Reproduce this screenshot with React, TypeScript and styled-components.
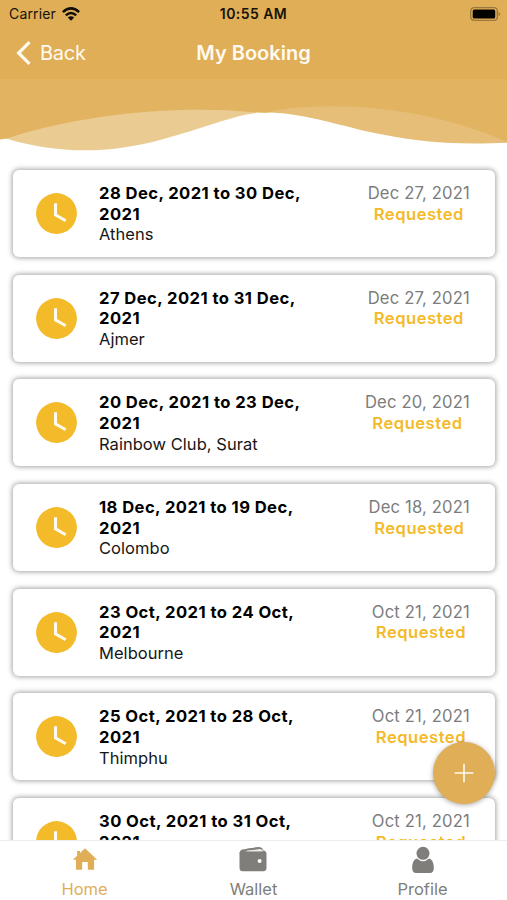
import React from "react";
import styled, { createGlobalStyle } from "styled-components";

const gold = "#e0ae57";
const amber = "#f3ba2a";

const GlobalStyle = createGlobalStyle`
  * { box-sizing: border-box; }
  body { margin: 0; background: #fff; font-family: Inter, "Liberation Sans", sans-serif; overflow: hidden; }
  svg { display: block; }
`;

const Screen = styled.div`
  position: relative;
  width: 507px;
  height: 900px;
  display: flex;
  flex-direction: column;
  overflow: hidden;
  background: #fff;
`;

const Header = styled.header`
  height: 79px;
  flex: none;
  background: ${gold};
`;

const StatusBar = styled.div`
  height: 27px;
  display: grid;
  grid-template-columns: 1fr auto 1fr;
  align-items: center;
  padding: 0 6px 0 9px;
  color: #16120a;
`;

const Carrier = styled.div`
  display: flex;
  align-items: center;
  gap: 6px;
  font-size: 14px;
  letter-spacing: 0.15px;
`;

const Time = styled.div`
  margin-right: 3px;
  font-size: 14px;
  font-weight: 600;
  letter-spacing: 0.45px;
`;

const BatterySlot = styled.div`
  justify-self: end;
`;

const NavBar = styled.div`
  height: 52px;
  display: grid;
  grid-template-columns: 1fr auto 1fr;
  align-items: center;
  padding: 0 16px;
  color: #fffaf0;
`;

const BackButton = styled.div`
  display: flex;
  align-items: center;
  gap: 9px;
  font-size: 20px;
  letter-spacing: -0.25px;
`;

const Title = styled.h1`
  margin: 0;
  font-size: 20px;
  font-weight: 600;
  letter-spacing: 0;
`;

const Wave = styled.svg`
  flex: none;
`;

const List = styled.main`
  flex: 1;
  min-height: 0;
  display: flex;
  flex-direction: column;
  gap: 17.7px;
  padding: 10px 12px 0 13px;
  overflow: hidden;
`;

const Card = styled.article`
  height: 87px;
  flex: none;
  display: flex;
  align-items: flex-start;
  padding: 13px 25px 0 23px;
  border-radius: 6px;
  background: #fff;
  box-shadow: 0 0 5px 1px rgba(0, 0, 0, 0.36);
`;

const ClockSlot = styled.div`
  width: 63px;
  flex: none;
  padding-top: 10px;
`;

const Trip = styled.div`
  width: 215px;
  font-size: 16.6px;
  line-height: 20.6px;
  color: #161616;
`;

const Dates = styled.div`
  font-weight: 700;
  color: #000;
  letter-spacing: 0.43px;
`;

const Place = styled.div`
  font-size: 16.5px;
  letter-spacing: 0.04px;
`;

const Meta = styled.div`
  margin-left: auto;
  text-align: center;
  font-size: 16.6px;
  line-height: 20.6px;
  letter-spacing: 0.18px;
  color: #7c7c7c;
`;

const Status = styled.div`
  font-weight: 600;
  letter-spacing: 0.5px;
  color: ${amber};
`;

const AddButton = styled.div`
  position: absolute;
  right: 12px;
  top: 742px;
  width: 62px;
  height: 62px;
  border-radius: 50%;
  display: grid;
  place-items: center;
  background: ${gold};
  box-shadow: 0 1px 5px rgba(0, 0, 0, 0.35);
`;

const TabBar = styled.nav`
  position: relative;
  height: 60px;
  flex: none;
  display: grid;
  grid-template-columns: repeat(3, 1fr);
  background: #fff;
  border-top: 1px solid #ececec;
`;

const Tab = styled.div<{ $active?: boolean }>`
  display: flex;
  flex-direction: column;
  align-items: center;
  font-size: 16.5px;
  line-height: 20px;
  color: ${(p) => (p.$active ? gold : "#807e7a")};
`;

const TabIcon = styled.div`
  height: 38px;
  padding-top: 5px;
`;

const bookings = [
  { dates: "28 Dec, 2021 to 30 Dec, 2021", place: "Athens", created: "Dec 27, 2021" },
  { dates: "27 Dec, 2021 to 31 Dec, 2021", place: "Ajmer", created: "Dec 27, 2021" },
  { dates: "20 Dec, 2021 to 23 Dec, 2021", place: "Rainbow Club, Surat", created: "Dec 20, 2021" },
  { dates: "18 Dec, 2021 to 19 Dec, 2021", place: "Colombo", created: "Dec 18, 2021" },
  { dates: "23 Oct, 2021 to 24 Oct, 2021", place: "Melbourne", created: "Oct 21, 2021" },
  { dates: "25 Oct, 2021 to 28 Oct, 2021", place: "Thimphu", created: "Oct 21, 2021" },
  { dates: "30 Oct, 2021 to 31 Oct, 2021", created: "Oct 21, 2021" },
];

const WifiIcon = () => (
  <svg width="18" height="14" viewBox="0 0 18 14" fill="none" stroke="#120e06" strokeWidth="2.5">
    <path d="M.9 5.1Q9-2.3 17.1 5.1" />
    <path d="M3.8 8.4Q9 3.7 14.2 8.4" />
    <path d="M9 13.8 5.8 10.5Q9 7.8 12.2 10.5Z" fill="#120e06" stroke="none" />
  </svg>
);

const BatteryIcon = () => (
  <svg width="31" height="14" viewBox="0 0 31 14">
    <rect x=".7" y=".7" width="26.6" height="12.6" rx="3.4" fill="none" stroke="#9a783d" strokeWidth="1.3" />
    <rect x="2.7" y="2.5" width="22.5" height="9" rx="1.6" fill="#050300" />
    <path d="M28.7 4.7Q31 7 28.7 9.3Z" fill="#866833" />
  </svg>
);

const ClockIcon = () => (
  <svg width="41" height="41" viewBox="0 0 41 41">
    <circle cx="20.5" cy="20.5" r="20.4" fill={amber} />
    <path d="M19.5 10.2V21.8L29.7 27.8" fill="none" stroke="#fffaf0" strokeWidth="3" />
  </svg>
);

const HomeIcon = () => (
  <svg width="26" height="25" viewBox="0 0 26 25">
    <path d="M13 2.3 25.2 13.8H22.1V23.8H15.8V16H10.2V23.8H4V13.8H.8L5.1 9.7V5H8V7Z" fill={gold} />
  </svg>
);

const WalletIcon = () => (
  <svg width="30" height="26" viewBox="0 0 30 26">
    <path d="M3.5 3.4 19 1.2Q23 .8 24.3 4.1L24.5 4.8H5Q1.500 5.500 .5 8Q.3 4.200 3.500 3.400Z" fill="#807e7a" />
    <rect x=".5" y="4.600" width="27" height="20.600" rx="3.500" fill="#807e7a" />
    <path d="M7.500 4.900Q8 4.100 9.500 3.900L20.500 2.700Q23 2.600 24.500 4.900L22.500 5.500H7.500Z" fill="#e9e8e6" />
    <path d="M5 3.200 19 1.200Q22.500 .8 24 3.400L20.500 2.900 8 4.600Z" fill="#807e7a" />
    <circle cx="20.6" cy="15" r="2" fill="#fff" />
  </svg>
);

const ProfileIcon = () => (
  <svg width="24" height="28" viewBox="0 0 24 28" fill="#807e7a">
    <circle cx="12" cy="7.3" r="6.5" />
    <path d="M6 12.6Q12 18 18 12.6C21.7 13.4 22.8 18 22.8 22Q22.8 27 18.8 27H5.2Q1.2 27 1.2 22C1.2 18 2.3 13.4 6 12.6Z" />
  </svg>
);

export default function App() {
  return (
    <Screen>
      <GlobalStyle />
      <Header>
        <StatusBar>
          <Carrier>Carrier <WifiIcon /></Carrier>
          <Time>10:55 AM</Time>
          <BatterySlot><BatteryIcon /></BatterySlot>
        </StatusBar>
        <NavBar>
          <BackButton>
            <svg width="15" height="24" viewBox="0 0 15 24" fill="none" stroke="#fffaf0" strokeWidth="3.2">
              <path d="M13.5 1.2 2.6 12 13.5 22.8" />
            </svg>
            Back
          </BackButton>
          <Title>My Booking</Title>
        </NavBar>
      </Header>
      <Wave width="507" height="81" viewBox="0 79 507 81">
        <path d="M6 138.500C53 153 105 155 160 140C204 128 232 116 256 113V79H6Z" fill="#eacb91" />
        <path d="M250 79H507V142.700C450 145.500 410 141 365 131C325 121 295 112.500 266 112.500L250 112Z" fill="#e6be78" />
        <path d="M0 79H507V142C440 112 350 99 275 110.500C272 112 269 112.700 265 112.700Q259 112.300 253 112.300C180 105 80 114 7 138.600L0 139.500Z" fill="#e2b462" />
      </Wave>
      <List>
        {bookings.map((b) => (
          <Card key={b.dates}>
            <ClockSlot><ClockIcon /></ClockSlot>
            <Trip>
              <Dates>{b.dates}</Dates>
              {b.place && <Place>{b.place}</Place>}
            </Trip>
            <Meta>
              {b.created}
              <Status>Requested</Status>
            </Meta>
          </Card>
        ))}
      </List>
      <AddButton>
        <svg width="20" height="20" viewBox="0 0 20 20" stroke="#fffaf0" strokeWidth="1.6">
          <path d="M10 .7V19.300M.7 10H19.300" />
        </svg>
      </AddButton>
      <TabBar>
        <Tab $active><TabIcon><HomeIcon /></TabIcon>Home</Tab>
        <Tab><TabIcon><WalletIcon /></TabIcon>Wallet</Tab>
        <Tab><TabIcon><ProfileIcon /></TabIcon>Profile</Tab>
      </TabBar>
    </Screen>
  );
}
